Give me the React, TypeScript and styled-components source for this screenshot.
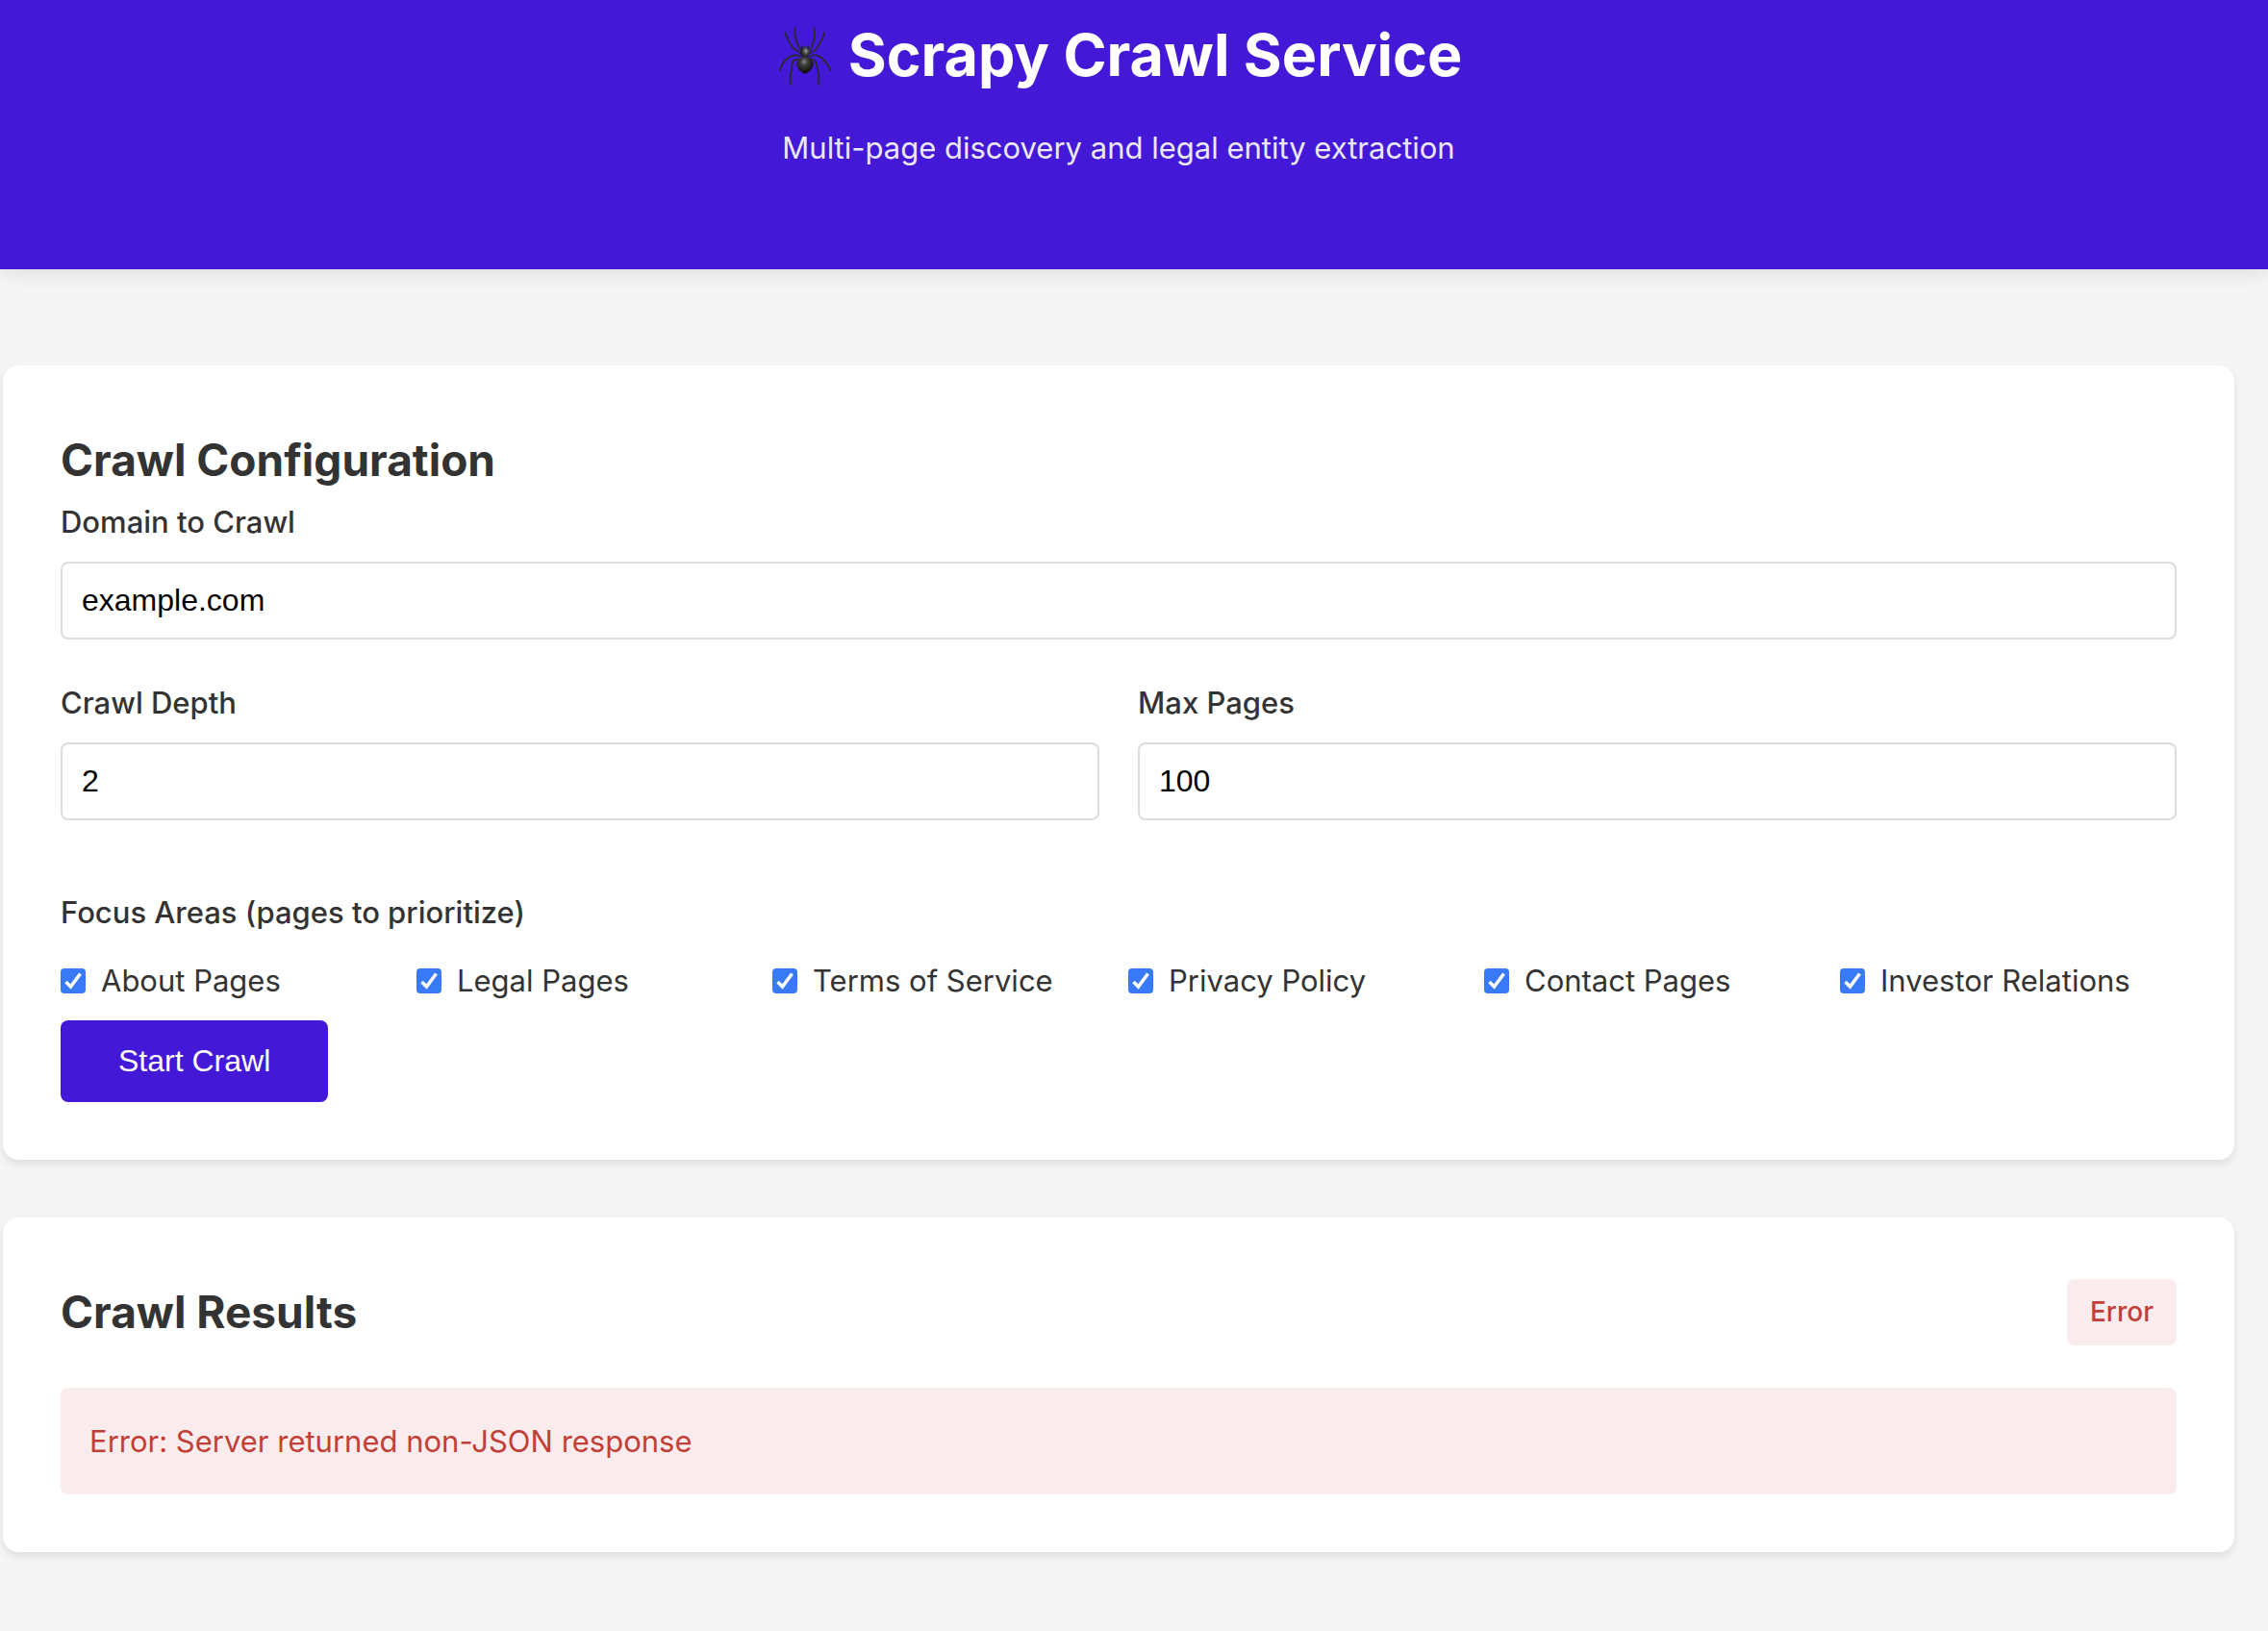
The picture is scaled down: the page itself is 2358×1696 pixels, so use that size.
import React, { useState } from 'react';
import styled, { createGlobalStyle } from 'styled-components';

const sans = `Inter, "Noto Sans", sans-serif`;
const controlFont = `"Liberation Sans", Arial, sans-serif`;
const brand = '#4318d6';

const GlobalStyle = createGlobalStyle`
  *, *::before, *::after {
    box-sizing: border-box;
  }
  body {
    margin: 0;
    background: #f5f5f5;
    color: #333;
    font-family: ${sans};
    font-size: 31px;
    line-height: 51px;
  }
`;

const Header = styled.header`
  padding: 6px 35px 101px 3px;
  background: ${brand};
  color: #fff;
  text-align: center;
  box-shadow: 0 4px 20px rgba(0, 0, 0, 0.1);
`;

const Title = styled.h1`
  display: flex;
  justify-content: center;
  align-items: center;
  gap: 16px;
  margin: 0 0 20px;
  font-size: 61px;
  font-weight: 700;
  line-height: 102px;
`;

const SpiderIcon = styled.svg`
  width: 60px;
  height: 64px;
`;

const Tagline = styled.p`
  margin: 0;
  opacity: 0.9;
`;

const Main = styled.main`
  display: grid;
  gap: 60px;
  padding: 100px 35px 82px 3px;
`;

const Card = styled.section`
  padding: 60px;
  background: #fff;
  border-radius: 16px;
  box-shadow: 0 4px 8px rgba(0, 0, 0, 0.1);
`;

const CardTitle = styled.h2`
  margin: 0;
  font-size: 46px;
  font-weight: 700;
  line-height: 77px;
`;

const Field = styled.div`
  margin-bottom: 40px;
`;

const FieldRow = styled.div`
  display: grid;
  grid-template-columns: repeat(auto-fit, minmax(400px, 1fr));
  column-gap: 40px;
  margin-bottom: 30px;
`;

const Label = styled.label`
  display: block;
  margin-bottom: 16px;
  font-weight: 500;
`;

const TextInput = styled.input`
  display: block;
  width: 100%;
  height: 81px;
  padding: 20px;
  border: 2px solid #ddd;
  border-radius: 8px;
  background: #fff;
  color: #000;
  font-family: ${controlFont};
  font-size: 32px;
  line-height: 37px;
  appearance: textfield;

  &::-webkit-inner-spin-button {
    appearance: none;
  }
`;

const FocusGroup = styled.fieldset`
  min-width: 0;
  margin: 0 0 16px;
  padding: 0;
  border: 0;
`;

const Legend = styled.legend`
  padding: 0;
  font-weight: 500;
`;

const CheckGrid = styled.div`
  display: grid;
  grid-template-columns: repeat(auto-fit, minmax(320px, 1fr));
  gap: 20px;
  padding-top: 20px;
`;

const CheckLabel = styled.label`
  display: flex;
  align-items: center;
  gap: 16px;
  white-space: nowrap;
`;

const CheckFrame = styled.span`
  display: grid;
  flex: none;
  width: 26px;
  height: 26px;

  & > * {
    grid-area: 1 / 1;
  }
`;

const CheckInput = styled.input`
  appearance: none;
  width: 26px;
  height: 26px;
  margin: 0;
  border: 2px solid #767676;
  border-radius: 4px;
  background: #fff;

  &:checked {
    border-color: #3779f7;
    background: #3779f7;
  }
`;

const CheckMark = styled.svg`
  width: 26px;
  height: 26px;
  pointer-events: none;
`;

const SubmitButton = styled.button`
  display: block;
  padding: 24px 60px;
  border: 0;
  border-radius: 8px;
  background: ${brand};
  color: #fff;
  font-family: ${controlFont};
  font-size: 32px;
  line-height: 37px;
  cursor: pointer;
`;

const ResultsHeader = styled.div`
  display: flex;
  justify-content: space-between;
  align-items: center;
  margin-bottom: 40px;
`;

const StatusBadge = styled.span`
  padding: 12px 24px;
  border-radius: 8px;
  background: #faecec;
  color: #c23f38;
  font-size: 28px;
  font-weight: 500;
  line-height: 45px;
`;

const ErrorMessage = styled.div`
  padding: 30px;
  border-radius: 8px;
  background: #faecec;
  color: #c23f38;
`;

const focusAreas = [
  'About Pages',
  'Legal Pages',
  'Terms of Service',
  'Privacy Policy',
  'Contact Pages',
  'Investor Relations',
];

function Spider() {
  return (
    <SpiderIcon viewBox="0 -2 64 68" role="img" aria-label="Spider">
      <defs>
        <radialGradient id="abdomen" cx="0.45" cy="0.3" r="0.65">
          <stop offset="0" stopColor="#858585" />
          <stop offset="0.35" stopColor="#3c3c3c" />
          <stop offset="1" stopColor="#0c0c0c" />
        </radialGradient>
        <radialGradient id="thorax" cx="0.6" cy="0.4" r="0.6">
          <stop offset="0" stopColor="#a0a0a0" />
          <stop offset="0.5" stopColor="#444" />
          <stop offset="1" stopColor="#151515" />
        </radialGradient>
      </defs>
      <g fill="none" stroke="#2b2936" strokeWidth="2" strokeLinecap="round" strokeLinejoin="round">
        <path d="M29 30 C24 28 19 25 17 20 C15 15 12 13 11.500 8" />
        <path d="M30 28 C26 24 24 20 23 15 C22 9 21 6 22 2" />
        <path d="M37 28 C41 24 42 20 43 15 C44 9 44 6 43 2" />
        <path d="M38 30 C43 28 47 25 49 20 C51 15 54 13 54.500 8" />
        <path d="M28 34 C23 31 19 32 15 35 C9 39 7 43 5 49" />
        <path d="M28 38 C22 36 19 38 18.500 44 C18 51 16 56 17 65" />
        <path d="M38 38 C43 36 45 38 46 44 C48 51 49 56 48.500 65" />
        <path d="M38 34 C43 31 47 32 51 35 C56 39 59 43 61 49" />
      </g>
      <path d="M29 26 L29 21 L31 24 L35 24 L37 21 L37 26 Z" fill="#1c1c1c" />
      <ellipse cx="33" cy="29" rx="5" ry="6" fill="url(#thorax)" />
      <path d="M33 34 C40 34 42 38 42 42 C42 47 38 51 33 53 C28 51 24 47 24 42 C24 38 27 34 33 34 Z" fill="url(#abdomen)" />
    </SpiderIcon>
  );
}

function Checkbox({ label }: { label: string }) {
  const [checked, setChecked] = useState(true);
  return (
    <CheckLabel>
      <CheckFrame>
        <CheckInput type="checkbox" checked={checked} onChange={(e) => setChecked(e.target.checked)} />
        {checked && (
          <CheckMark viewBox="0 0 26 26" aria-hidden="true">
            <path d="M5.500 14 L10.500 19 L20.500 5.500" fill="none" stroke="#fff" strokeWidth="3.500" />
          </CheckMark>
        )}
      </CheckFrame>
      {label}
    </CheckLabel>
  );
}

export default function App() {
  return (
    <>
      <GlobalStyle />
      <Header>
        <Title>
          <Spider />
          Scrapy Crawl Service
        </Title>
        <Tagline>Multi-page discovery and legal entity extraction</Tagline>
      </Header>
      <Main>
        <Card>
          <CardTitle>Crawl Configuration</CardTitle>
          <form onSubmit={(e) => e.preventDefault()}>
            <Field>
              <Label htmlFor="domain">Domain to Crawl</Label>
              <TextInput id="domain" type="text" defaultValue="example.com" />
            </Field>
            <FieldRow>
              <Field>
                <Label htmlFor="depth">Crawl Depth</Label>
                <TextInput id="depth" type="number" defaultValue={2} />
              </Field>
              <Field>
                <Label htmlFor="max-pages">Max Pages</Label>
                <TextInput id="max-pages" type="number" defaultValue={100} />
              </Field>
            </FieldRow>
            <FocusGroup>
              <Legend>Focus Areas (pages to prioritize)</Legend>
              <CheckGrid>
                {focusAreas.map((area) => (
                  <Checkbox key={area} label={area} />
                ))}
              </CheckGrid>
            </FocusGroup>
            <SubmitButton type="submit">Start Crawl</SubmitButton>
          </form>
        </Card>
        <Card>
          <ResultsHeader>
            <CardTitle>Crawl Results</CardTitle>
            <StatusBadge>Error</StatusBadge>
          </ResultsHeader>
          <ErrorMessage role="alert">Error: Server returned non-JSON response</ErrorMessage>
        </Card>
      </Main>
    </>
  );
}
